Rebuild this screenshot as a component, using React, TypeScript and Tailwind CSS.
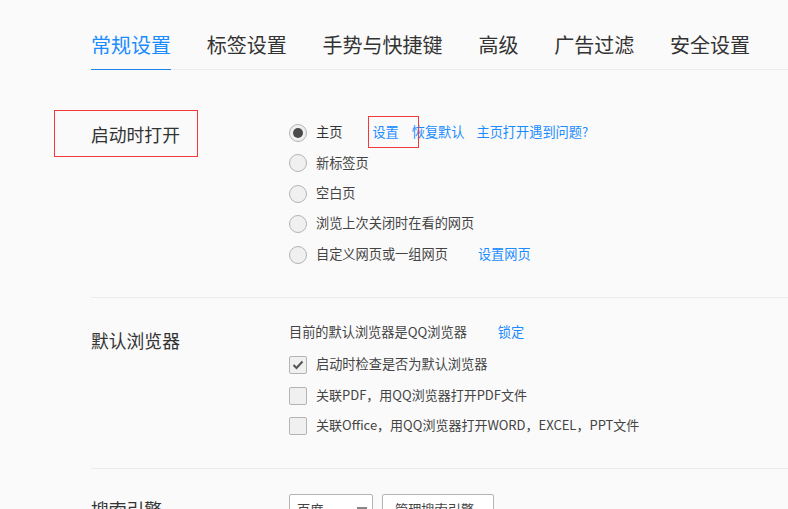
import React from "react";

const font = { fontFamily: '"Noto Sans CJK SC", sans-serif' };

function Radio({ checked }: { checked?: boolean }) {
  return (
    <span className="w-[18px] h-[18px] shrink-0 rounded-full border border-[#b4b4b4] bg-[#f0f0f0] flex items-center justify-center">
      {checked && <span className="w-[10px] h-[10px] rounded-full bg-[#4a4a4a]" />}
    </span>
  );
}

function Check({ checked }: { checked?: boolean }) {
  return (
    <span className="w-[18px] h-[18px] shrink-0 rounded-[2px] border border-[#b4b4b4] bg-[#f0f0f0] flex items-center justify-center">
      {checked && (
        <svg width="12" height="10" viewBox="0 0 12 10" fill="none">
          <path d="M1.5 5 L4.5 8 L10.5 1.5" stroke="#555555" strokeWidth="2" />
        </svg>
      )}
    </span>
  );
}

function Link({ children, className = "" }: { children: React.ReactNode; className?: string }) {
  return <span className={"text-[#1a8cff] " + className}>{children}</span>;
}

export default function App() {
  const tabs = ["标签设置", "手势与快捷键", "高级", "广告过滤", "安全设置"];
  return (
    <div className="relative w-[788px] h-[509px] overflow-hidden bg-[#fafafa] pl-[91px] text-[13.2px] text-[#444444]" style={font}>
      <div className="flex gap-[35.8px] h-[70px] border-b border-[#ececec] w-[800px]">
        <div className="h-[70px] border-b border-[#1a86ea] pt-[30px] text-[20px] leading-[30px] text-[#1a8cff]">常规设置</div>
        {tabs.map((t) => (
          <div key={t} className="pt-[30px] text-[20px] leading-[30px] text-[#333333]">{t}</div>
        ))}
      </div>

      <div className="flex h-[228px] border-b border-[#ececec] w-[800px] pt-[52px]">
        <div className="w-[198px] text-[17.8px] leading-[24px] text-[#333333]">启动时打开</div>
        <div className="flex flex-col gap-[12.4px] pt-[2px]">
          <div className="flex items-center h-[18px]">
            <Radio checked />
            <span className="ml-[9px] pb-[3px] text-[#333333]">主页</span>
            <Link className="ml-[30px] pb-[3px]">设置</Link>
            <Link className="ml-[13px] pb-[3px]">恢复默认</Link>
            <Link className="ml-[12px] pb-[3px]">主页打开遇到问题?</Link>
          </div>
          <div className="flex items-center h-[18px]"><Radio /><span className="ml-[9px] pb-[1px]">新标签页</span></div>
          <div className="flex items-center h-[18px]"><Radio /><span className="ml-[9px] pb-[1px]">空白页</span></div>
          <div className="flex items-center h-[18px]"><Radio /><span className="ml-[9px] pb-[2px]">浏览上次关闭时在看的网页</span></div>
          <div className="flex items-center h-[18px]">
            <Radio />
            <span className="ml-[9px] pb-[2px]">自定义网页或一组网页</span>
            <Link className="ml-[30px] pb-[2px]">设置网页</Link>
          </div>
        </div>
      </div>

      <div className="flex h-[171px] border-b border-[#ececec] w-[800px] pt-[24px]">
        <div className="w-[198px] mt-[6px] text-[17.8px] leading-[24px] text-[#333333]">默认浏览器</div>
        <div className="flex flex-col">
          <div className="flex items-center h-[20px]">
            <span>目前的默认浏览器是QQ浏览器</span>
            <Link className="ml-[31px]">锁定</Link>
          </div>
          <div className="flex flex-col gap-[12.5px] mt-[14px]">
            <div className="flex items-center h-[18px]"><Check checked /><span className="ml-[9px] pb-[2px]">启动时检查是否为默认浏览器</span></div>
            <div className="flex items-center h-[18px]"><Check /><span className="ml-[9px] pb-[2px] text-[13px]">关联PDF，用QQ浏览器打开PDF文件</span></div>
            <div className="flex items-center h-[18px]"><Check /><span className="ml-[9px] pb-[2px] text-[13px]">关联Office，用QQ浏览器打开WORD，EXCEL，PPT文件</span></div>
          </div>
        </div>
      </div>

      <div className="flex pt-[25px]">
        <div className="w-[198px] mt-[3px] text-[17.8px] leading-[24px] text-[#333333]">搜索引擎</div>
        <div className="flex gap-[9px]">
          <div className="w-[84px] h-[32px] rounded-[2px] border border-[#b4b4b4] bg-white pl-[7px] flex items-start justify-between pr-[5px]">
            <span className="leading-[30px]">百度</span>
            <span className="mt-[12px] w-[10px] h-[2px] bg-[#888888]" />
          </div>
          <div className="w-[112px] h-[32px] rounded-[2px] border border-[#b4b4b4] bg-white pl-[12px] leading-[30px]">管理搜索引擎</div>
        </div>
      </div>

      <div className="absolute left-[54px] top-[110px] w-[144px] h-[47px] border border-[#f23a3a]" />
      <div className="absolute left-[368px] top-[116px] w-[51px] h-[32px] border border-[#f23a3a]" />
    </div>
  );
}
